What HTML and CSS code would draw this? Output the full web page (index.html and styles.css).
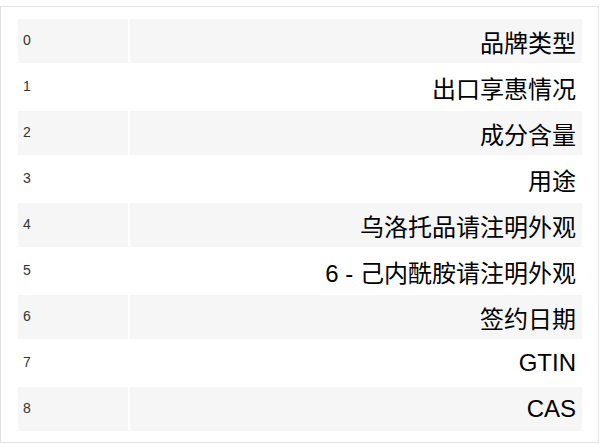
FILE: index.html
```html
<!DOCTYPE html>
<html>
<head>
<meta charset="utf-8">
<link rel="stylesheet" href="styles.css">
</head>
<body>
<div class="wrap">
  <table class="list">
    <tbody>
      <tr class="odd"><td class="idx">0</td><td class="val">品牌类型</td></tr>
      <tr><td class="idx">1</td><td class="val">出口享惠情况</td></tr>
      <tr class="odd"><td class="idx">2</td><td class="val">成分含量</td></tr>
      <tr><td class="idx">3</td><td class="val">用途</td></tr>
      <tr class="odd"><td class="idx">4</td><td class="val">乌洛托品请注明外观</td></tr>
      <tr><td class="idx">5</td><td class="val">6 - 己内酰胺请注明外观</td></tr>
      <tr class="odd"><td class="idx">6</td><td class="val">签约日期</td></tr>
      <tr><td class="idx">7</td><td class="val">GTIN</td></tr>
      <tr class="odd"><td class="idx">8</td><td class="val">CAS</td></tr>
    </tbody>
  </table>
</div>
</body>
</html>
```

FILE: styles.css
```css
html, body {
  margin: 0;
  padding: 0;
  background: #ffffff;
}
body {
  font-family: "Liberation Sans", Arial, "Noto Sans CJK SC", sans-serif;
}
.wrap {
  box-sizing: border-box;
  width: 599px;
  margin-top: 6px;
  border: 1px solid #e3e3e3;
  padding: 10px 14px 9px 15px;
}
.list {
  width: 100%;
  border-collapse: separate;
  border-spacing: 2px;
}
.list td {
  height: 44px;
  padding: 0;
  vertical-align: middle;
}
.list tr.odd td {
  background: #f6f6f6;
}
.idx {
  width: 110px;
  box-sizing: border-box;
  padding-left: 5px !important;
  padding-bottom: 2px !important;
  font-size: 14px;
  color: #333333;
}
.val {
  text-align: right;
  padding-right: 6px !important;
  font-size: 24px;
  color: #000000;
  font-family: "Liberation Sans", Arial, "Noto Sans CJK SC", sans-serif;
}
```
